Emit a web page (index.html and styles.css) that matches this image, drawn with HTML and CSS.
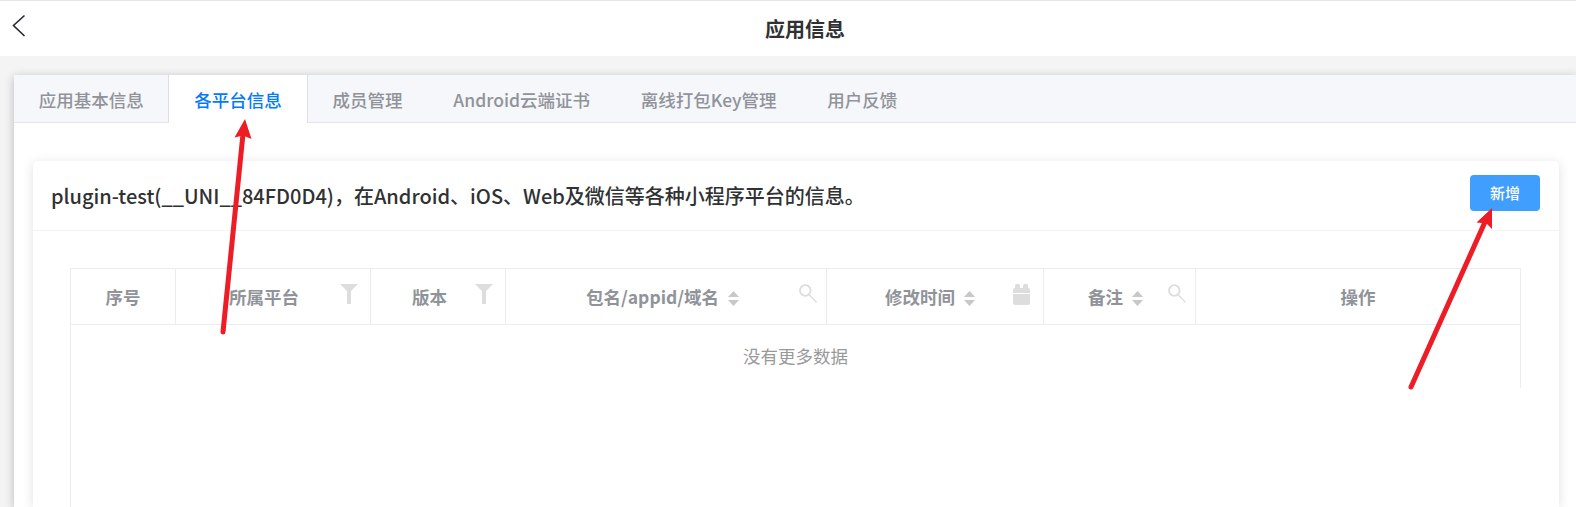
FILE: index.html
```html
<!DOCTYPE html>
<html lang="zh-CN">
<head>
<meta charset="utf-8">
<title>应用信息</title>
<link rel="stylesheet" href="styles.css">
</head>
<body>
<header class="topbar">
  <svg class="back" width="14" height="24" viewBox="0 0 14 24"><path d="M12.500 2.500 1.500 12.500 12.500 23" /></svg>
  <h1 class="page-title">应用信息</h1>
</header>
<main class="panel">
  <nav class="tabs">
    <a class="tab">应用基本信息</a>
    <a class="tab active">各平台信息</a>
    <a class="tab">成员管理</a>
    <a class="tab">Android云端证书</a>
    <a class="tab">离线打包Key管理</a>
    <a class="tab">用户反馈</a>
  </nav>
  <section class="card">
    <div class="card-head">
      <h2 class="card-title">plugin-test(__UNI__84FD0D4)，在Android、iOS、Web及微信等各种小程序平台的信息。</h2>
      <button class="add">新增</button>
    </div>
    <div class="table">
      <div class="thead">
        <div class="th">序号</div>
        <div class="th platform"><span>所属平台</span><svg class="icon" width="18" height="20" viewBox="0 0 18 20"><path d="M0 0H18L11 7V20H7V7Z"/></svg></div>
        <div class="th version"><span>版本</span><svg class="icon" width="18" height="20" viewBox="0 0 18 20"><path d="M0 0H18L11 7V20H7V7Z"/></svg></div>
        <div class="th package"><span>包名/appid/域名</span><svg class="sort" width="11" height="15" viewBox="0 0 11 15"><path d="M0 6 5.500 0 11 6ZM0 9H11L5.500 15Z"/></svg><svg class="icon search" width="18" height="19" viewBox="0 0 18 19"><circle cx="6.300" cy="6.500" r="5.300"/><path d="M10.300 11 17.500 18.300"/></svg></div>
        <div class="th time"><span>修改时间</span><svg class="sort" width="11" height="15" viewBox="0 0 11 15"><path d="M0 6 5.500 0 11 6ZM0 9H11L5.500 15Z"/></svg><svg class="icon calendar" width="17" height="21" viewBox="0 0 17 21"><rect x="2" width="5" height="6" rx="1.500"/><rect x="10" width="5" height="6" rx="1.500"/><path d="M2 4H15Q17 4 17 6V9H0V6Q0 4 2 4ZM0 10H17V19Q17 21 15 21H2Q0 21 0 19Z"/></svg></div>
        <div class="th remark"><span>备注</span><svg class="sort" width="11" height="15" viewBox="0 0 11 15"><path d="M0 6 5.500 0 11 6ZM0 9H11L5.500 15Z"/></svg><svg class="icon search" width="18" height="19" viewBox="0 0 18 19"><circle cx="6.300" cy="6.500" r="5.300"/><path d="M10.300 11 17.500 18.300"/></svg></div>
        <div class="th">操作</div>
      </div>
      <div class="empty">没有更多数据</div>
    </div>
  </section>
</main>
<svg class="arrows" width="1576" height="507" viewBox="0 0 1576 507">
  <path class="shaft" d="M223 332 243 134M1411 387 1485 222"/>
  <path class="head" d="M245 119 251.500 139 243 135.500 234.500 137.500ZM1492 208V229L1486.500 223.500 1476.500 222.500Z"/>
</svg>
</body>
</html>
```

FILE: styles.css
```css
* { box-sizing: border-box; }
body {
  margin: 0;
  height: 507px;
  overflow: hidden;
  display: flex;
  flex-direction: column;
  background: #f4f4f4;
  font-family: "Noto Sans CJK SC", sans-serif;
  font-size: 17.5px;
  color: #303133;
}
.topbar {
  flex: none;
  height: 56px;
  display: flex;
  border-top: 1px solid #e6e6e6;
  background: #fff;
}
.back { flex: none; margin: 12px 0 0 12px; fill: none; stroke: #25282d; stroke-width: 1.6; }
.page-title {
  flex: 1;
  margin: 13px 0 0 8px;
  font-size: 20px;
  line-height: 30px;
  font-weight: 700;
  text-align: center;
}
.panel {
  flex: 1;
  min-height: 0;
  margin: 19px 0 0 14px;
  background: #fff;
  box-shadow: 0 2px 9px rgba(0, 0, 0, .25);
}
.tabs {
  display: flex;
  height: 48px;
  background: #f5f7fb;
  border-bottom: 1px solid #e1e4eb;
}
.tab {
  margin-left: -1.25px;
  padding: 0 25px;
  border: solid transparent;
  border-width: 0 1px;
  height: 48px;
  line-height: 50px;
  font-weight: 500;
  color: #909399;
}
.tab.active {
  margin-left: -1.6px;
  padding-right: 25.2px;
  border-color: #dcdfe6;
  background: #fff;
  color: #007aff;
}
.card {
  margin: 38px 17px 0 19px;
  height: 346px;
  border-radius: 5px 5px 0 0;
  background: #fff;
  box-shadow: 0 2px 12px rgba(0, 0, 0, .12);
}
.card-head {
  display: flex;
  justify-content: space-between;
  height: 70px;
  padding: 14px 19px 0 18px;
  border-bottom: 1px solid #f2f3f6;
}
.card-title { margin: 6px 0 0; font-size: 20px; line-height: 30px; font-weight: 500; }
.add {
  width: 70px;
  height: 36px;
  padding: 0;
  border: 0;
  border-radius: 4px;
  background: #409eff;
  color: #fff;
  font: 500 15px/36px "Noto Sans CJK SC", sans-serif;
}
.table { margin: 37px 38px 0 37px; height: 239px; border-left: 1px solid #eaecf5; }
.thead {
  display: grid;
  grid-template-columns: 105px 195px 135px 321px 217px 152px 325px;
  height: 57px;
  border: solid #eaecf5;
  border-width: 1px 0;
}
.th {
  display: flex;
  align-items: flex-start;
  justify-content: center;
  border-right: 1px solid #eaecf5;
  line-height: 26px;
  padding-top: 15px;
  font-weight: 700;
  color: #909399;
}
.th svg { flex: none; }
.platform, .version, .package, .time, .remark { justify-content: flex-start; }
.platform { padding-left: 53px; }
.version { padding-left: 41px; }
.package { padding-left: 80px; }
.time { padding-left: 58px; }
.remark { padding-left: 44px; }
.icon { margin: 0 12px 0 auto; fill: #ddd; }
.search { fill: none; stroke: #ddd; stroke-width: 1.8; margin-right: 9.5px; }
.search path { stroke-width: 1.3; }
.calendar { margin-right: 13px; }
.sort { margin: 7px 0 0 8.6px; fill: #c8c8c8; }
.empty {
  height: 63px;
  border-right: 1px solid #eaecf5;
  line-height: 62px;
  text-align: center;
  color: #999;
}
.arrows { position: absolute; left: 0; top: 0; }
.shaft { fill: none; stroke: #ee1c25; stroke-width: 5; stroke-linecap: round; }
.head { fill: #ee1c25; }
```
